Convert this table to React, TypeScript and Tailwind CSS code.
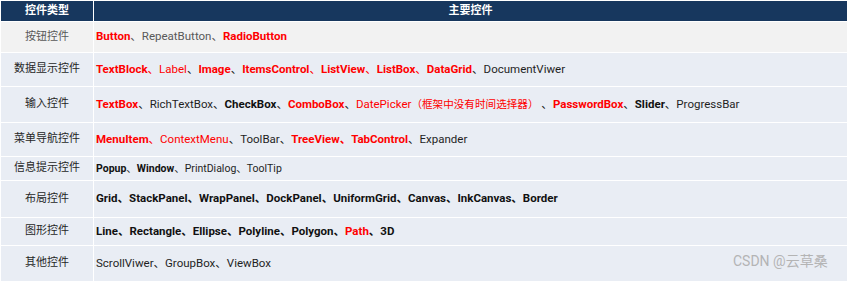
import React from "react";

type Seg = [string, string];

const rows: { label: string; h: string; grey?: boolean; small?: boolean; segs: Seg[] }[] = [
  {
    label: "按钮控件",
    h: "h-[30px]",
    grey: true,
    segs: [
      ["Button", "rb"],
      ["、", "g"],
      ["RepeatButton", "g"],
      ["、", "g"],
      ["RadioButton", "rb"],
    ],
  },
  {
    label: "数据显示控件",
    h: "h-[33px]",
    segs: [
      ["TextBlock", "rb"],
      ["、", "rn"],
      ["Label", "rn"],
      ["、", "n"],
      ["Image", "rb"],
      ["、", "n"],
      ["ItemsControl", "rb"],
      ["、", "rn"],
      ["ListView", "rb"],
      ["、", "rn"],
      ["ListBox", "rb"],
      ["、", "rn"],
      ["DataGrid", "rb"],
      ["、", "n"],
      ["DocumentViwer", "n"],
    ],
  },
  {
    label: "输入控件",
    h: "h-[35px]",
    segs: [
      ["TextBox", "rb"],
      ["、", "n"],
      ["RichTextBox", "n"],
      ["、", "n"],
      ["CheckBox", "b"],
      ["、", "n"],
      ["ComboBox", "rb"],
      ["、", "n"],
      ["DatePicker", "rn"],
      ["（框架中没有时间选择器）", "rc"],
      [" 、", "n"],
      ["PasswordBox", "rb"],
      ["、", "n"],
      ["Slider", "b"],
      ["、", "n"],
      ["ProgressBar", "n"],
    ],
  },
  {
    label: "菜单导航控件",
    h: "h-[33px]",
    segs: [
      ["MenuItem", "rb"],
      ["、", "rn"],
      ["ContextMenu", "rn"],
      ["、", "n"],
      ["ToolBar", "n"],
      ["、", "n"],
      ["TreeView", "rb"],
      ["、", "rb"],
      ["TabControl", "rb"],
      ["、", "n"],
      ["Expander", "n"],
    ],
  },
  {
    label: "信息提示控件",
    h: "h-[23px]",
    small: true,
    segs: [
      ["Popup", "b"],
      ["、", "n"],
      ["Window", "b"],
      ["、", "n"],
      ["PrintDialog", "n"],
      ["、", "n"],
      ["ToolTip", "n"],
    ],
  },
  {
    label: "布局控件",
    h: "h-[36px]",
    segs: [
      ["Grid、StackPanel、WrapPanel、DockPanel、UniformGrid、Canvas、InkCanvas、Border", "b"],
    ],
  },
  {
    label: "图形控件",
    h: "h-[27px]",
    segs: [
      ["Line、Rectangle、Ellipse、Polyline、Polygon、", "b"],
      ["Path", "rb"],
      ["、3D", "b"],
    ],
  },
  {
    label: "其他控件",
    h: "h-[35px]",
    segs: [["ScrollViwer、GroupBox、ViewBox", "n"]],
  },
];

const cls: Record<string, string> = {
  rb: "text-[#ff0000] font-bold",
  rn: "text-[#ff0000]",
  rc: "text-[#ff0000] text-[10.6px]",
  b: "text-[#111111] font-bold",
  n: "text-[#1f1f1f]",
  g: "text-[#595959]",
};

export default function App() {
  return (
    <div
      className="relative w-[848px] h-[281px] bg-white p-[1px] overflow-hidden"
      style={{ fontFamily: 'Roboto, "Noto Sans CJK SC", sans-serif' }}
    >
      <div className="flex flex-col gap-[1px]">
        <div className="flex gap-[1px] h-[20px]">
          <div className="w-[92px] bg-[#17375e] text-white font-bold text-[11px] flex items-center justify-center">
            控件类型
          </div>
          <div className="w-[753px] bg-[#17375e] text-white font-bold text-[11px] flex items-center justify-center">
            主要控件
          </div>
        </div>
        {rows.map((r, i) => (
          <div key={i} className={`flex gap-[1px] ${r.h}`}>
            <div
              className={`w-[92px] flex items-center justify-center text-[11px] ${
                i === 0 ? "bg-[#f2f2f2] text-[#595959]" : "bg-[#e9edf4] text-[#262626]"
              }`}
            >
              {r.label}
            </div>
            <div
              className={`w-[753px] flex items-center pl-[2px] whitespace-pre ${
                r.small ? "text-[10.5px]" : "text-[11.5px]"
              } ${i === 0 ? "bg-[#f2f2f2]" : "bg-[#e9edf4]"}`}
            >
              {r.segs.map((s, j) => (
                <span key={j} className={cls[s[1]]}>
                  {s[0]}
                </span>
              ))}
            </div>
          </div>
        ))}
      </div>
      <div className="absolute left-[733px] top-[254px] text-[14px] text-[#b4b4b4] leading-none">
        CSDN @云草桑
      </div>
    </div>
  );
}
